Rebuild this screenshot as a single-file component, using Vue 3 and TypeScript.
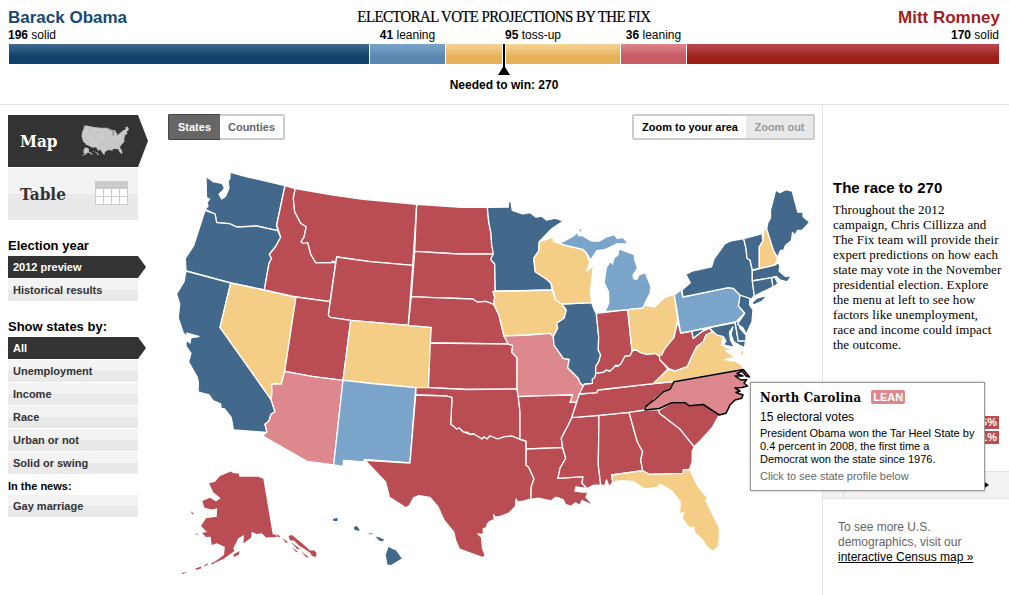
<script setup lang="ts">
interface Segment { id: string; votes: number; label: string }
interface Shape { id: string; rating: string; d: string }

const segments: Segment[] = [
  { id: 'dem', votes: 196, label: 'solid' },
  { id: 'dem-lean', votes: 41, label: 'leaning' },
  { id: 'toss', votes: 95, label: 'toss-up' },
  { id: 'rep-lean', votes: 36, label: 'leaning' },
  { id: 'rep', votes: 170, label: 'solid' },
]

const years: string[] = ['2012 preview', 'Historical results']
const filters: string[] = ['All', 'Unemployment', 'Income', 'Race', 'Urban or not', 'Solid or swing']

const states: Shape[] = [
  { id: 'WA', rating: 'dem', d: 'M230 172.2L246 176.5 261.7 180.2 285 185.7 276.7 225 277.7 230.7 267 228.5 256.7 226 236.7 227 229.3 223.7 216.7 222.7 215 214 205 209.3 208 206 207 203 209.5 199 206.5 197.5 206 176.5 209.5 179 213 181.5 222 183.3 224.5 188 222.5 191 219 194.3 221.7 199 225.5 196.5 229 188 228 181.7 230 178Z' },
  { id: 'OR', rating: 'dem', d: 'M205 210.5L215 214 216.7 222.7 229.3 223.7 236.7 227 256.7 226 277.7 230.7 280.7 237.3 276 246 269.3 254.5 271.7 258.3 269 263.3 264.3 290 230.7 283 186 271 185.3 258.3 193.5 246 199 229Z' },
  { id: 'CA', rating: 'dem', d: 'M186 271L230.7 283 220 327.3 271 399.3 275 411.7 271 414.3 269 421 265 424.3 267 432.5 233.4 429.8 231.2 417.3 224.5 409 221.2 408.5 220.5 403.8 213 400.5 209 394.8 198 392 198.4 383 197.2 377 188.5 361.7 191 353.3 186 346 186 340 190 343 191 337.5 199 336.5 187 333 186 336 183.2 332.7 178.2 318 179.7 304 176.5 294 184 281.7Z' },
  { id: 'NV', rating: 'toss', d: 'M230.7 283L264.3 290 296 297 284.7 371.3 281.3 384 271.7 384 272 393.3 271 399.3 220 327.3Z' },
  { id: 'ID', rating: 'rep', d: 'M285 185.7L295.3 188.7 293.3 198.3 294.7 211.7 300.7 223.3 306.3 226.7 304 237.3 301 241.7 303.5 243.5 307.7 242.3 310.7 254 315.7 262.7 332.7 262.7 335.7 262.3 330 301.7 296 297 264.3 290 269 263.3 271.7 258.3 269.3 254.5 276 246 280.7 237.3 276.7 225Z' },
  { id: 'MT', rating: 'rep', d: 'M295.3 188.7L330 194.5 363.3 199.3 416.7 204.3 412.7 265.3 370 261.7 336.7 257 335.7 262.3 333 261 331 262.7 315.7 262.7 310.7 254 307.7 242.3 303.5 243.5 301 241.7 304 237.3 306.3 226.7 300.7 223.3 294.7 211.7 293.3 198.3Z' },
  { id: 'WY', rating: 'rep', d: 'M336.7 257L370 261.7 412.7 265.3 408.3 325.3 350.7 320.3 330 317.3 328.3 315Z' },
  { id: 'UT', rating: 'rep', d: 'M296 297L330 301.7 328.3 315 330 317.3 350.7 320.3 343 380.3 313.3 376.7 284.7 371.3Z' },
  { id: 'CO', rating: 'toss', d: 'M350.7 320.3L408.3 325.3 431.3 327.3 428.5 387.7 415.7 387.7 376.7 384 343 380.3Z' },
  { id: 'AZ', rating: 'rep-lean', d: 'M343 380.3L313.3 376.7 284.7 371.3 281.3 384 271.7 384 272 393.3 271 399.3 275 411.7 271 414.3 269 421 265 424.3 267 432 262.5 435.7 307.3 461.5 333.7 464.8Z' },
  { id: 'NM', rating: 'dem-lean', d: 'M343 380.3L376.7 384 415.7 387.7 410 463 364.3 459.3 364 462 343.6 460.3 343 466.5 333.7 465Z' },
  { id: 'ND', rating: 'rep', d: 'M416.7 204.3L461.7 207.3 487.3 207.3 488.7 221.7 491 233.3 491.7 245 493.7 252 493.3 254 458.3 254 414.7 251.3Z' },
  { id: 'SD', rating: 'rep', d: 'M414.7 251.3L458.3 254 493.3 254 490.7 259.3 494.7 264 495.3 290.7 493 291.7 494.7 296.7 493.7 304.3 486 301.3 477.3 302 472.7 299 433.3 297.7 411.3 296.7Z' },
  { id: 'NE', rating: 'rep', d: 'M411.3 296.7L433.3 297.7 472.7 299 477.3 302 486 301.3 493.7 304.3 499 315 501.7 326.7 504 336 508.3 344 430.3 343 431.3 327.3 408.3 325.3Z' },
  { id: 'KS', rating: 'rep', d: 'M430.3 343L508.3 344 512.7 345.7 511.7 352.3 517 357.7 517 389 466.7 389.5 428.5 387.7Z' },
  { id: 'OK', rating: 'rep', d: 'M416 387.7L428.5 387.7 466.7 389.5 517 389 518.3 396.7 520 411.7 520 439.3 511.7 436 509 437.5 505 436.7 497.7 439 490 436 487 439 484 437 482 439 478.3 436.7 476 437 474 434 470 434.5 468 432.5 463.3 432 459 428 456.7 429 450.7 424.3 452 397.7 446.7 396 415.7 395Z' },
  { id: 'TX', rating: 'rep', d: 'M415.7 395L446.7 396 452 397.7 450.7 424.3 456.7 429 459 428 463.3 432 470 434.5 474 434 478.3 436.7 482 439 484 437 487 439 490 436 497.7 439 505 436.7 511.7 436 520 439.3 526 441 526 465 528.7 467.3 534 478.7 531.3 486.7 530.8 499 523.3 501.2 518 502 516 499 515.5 506.5 508.8 513.2 500 516.5 495.5 517.2 493.5 515 494.5 519.5 489.5 521.5 487.2 524.5 486.5 527.5 483.2 528.8 483.5 534.5 478 534 481.5 537 482.5 548.3 485.2 555.3 482.7 557.7 459.5 549.2 455.5 540 453.8 532.2 444.2 520.5 437.8 506.5 429.7 497.3 419 495.6 413.6 497.9 409.5 505.5 406 507.7 389.5 497.3 385.5 482 365 460.3 410 463Z' },
  { id: 'MN', rating: 'dem', d: 'M487.3 207.3L508.4 207 508.4 201.8 511 201.8 512.3 210.4 522.7 213.8 530 212.5 536 217.2 541.7 216.2 546.7 220.2 555 218.2 563.3 221 551.7 228.8 539.3 241.7 538.7 251 533.7 258.3 535.3 271.7 546.7 279.3 551 283.3 552 290 495.3 291 494.7 264 490.7 259.3 493.3 254 491.7 245 491 233.3 488.7 221.7Z' },
  { id: 'IA', rating: 'toss', d: 'M493 291.7L552 290 555.7 300 561.7 304 566.3 310 564 318.3 556.7 323.3 557.7 328.3 553.3 336.7 550 333.3 528.3 335 504 336 501.7 326.7 499 315 493.7 304.3 494.7 296.7Z' },
  { id: 'MO', rating: 'rep-lean', d: 'M504 336L528.3 335 550 333.3 553.3 336.7 554 345 563.3 358.3 569.3 359.3 567.7 367.7 578.3 378.3 580 382.7 583.3 386 582.3 392.7 579.3 394 576.7 402.3 570 402.3 572.7 395 546.7 395.7 518.3 396.7 517 389 517 357.7 511.7 352.3 512.7 345.7 508.3 344Z' },
  { id: 'AR', rating: 'rep', d: 'M518.3 396.7L546.7 395.7 572.7 395 570 402.3 576.7 402.3 571.7 417.7 568.3 425 561.3 438.3 562.7 447.7 526.3 449 526 441 520 439.3 520 411.7Z' },
  { id: 'LA', rating: 'rep', d: 'M526.3 449L562.7 447.7 565.7 458.3 560 468.3 558 478.3 583 476.7 582 483 587.5 488 582 488 576 487 575 491 582 492 588 492 586 497 593.5 505.5 582 500.5 579.5 505.5 575.7 502.8 571 506.2 565.5 504.5 563 499.6 559 498 555.7 497.3 551 501 538.3 498.2 530.8 499.5 531.3 486.7 534 478.7 528.7 467.3 526 465Z' },
  { id: 'MS', rating: 'rep', d: 'M571.7 417.7L599 415.3 598.3 465 600.7 485 593 485.5 587 488.5 582 483 583 476.7 558 478.3 560 468.3 565.7 458.3 562.7 447.7 561.3 438.3 568.3 425Z' },
  { id: 'AL', rating: 'rep', d: 'M599 415.3L629 412.3 637.3 441.7 642.7 451.7 640.7 460 642.7 470.7 611.7 475 612.7 482 609.3 487 606.5 480 604.5 486 600.7 485 598.3 465Z' },
  { id: 'TN', rating: 'rep', d: 'M571.7 417.7L599 415.3 629 412.3 645 410.3 645.7 406.7 651.7 401.7 663.3 391.7 670 389.3 674 381.7 653.3 383.7 597.7 390 596.7 392.7 579.3 394 576.7 402.3Z' },
  { id: 'KY', rating: 'rep', d: 'M579.3 394L596.7 392.7 597.7 390 653.3 383.7 668 369.3 663.3 363.3 660 360 659.3 356 655 353.3 646.7 354.3 640 352.3 635 349.3 632 351.7 630 355.7 625 356 620.7 364 618 366 613.3 366.7 610 371 606 370 604 372 595.7 373.3 592.3 379.3 592.3 383.3 584.3 384 583.3 386Z' },
  { id: 'IL', rating: 'dem', d: 'M561.7 304L591.7 302.7 594.3 310 596.3 313.3 598.7 336.7 598.3 350 600.7 355 598.7 361.7 595.7 366.7 595.7 373.3 595 377 592.3 379.3 592.3 383.3 584.3 384 583.3 386 580 382.7 578.3 378.3 567.7 367.7 569.3 359.3 563.3 358.3 554 345 553.3 336.7 557.7 328.3 556.7 323.3 564 318.3 566.3 310Z' },
  { id: 'IN', rating: 'rep', d: 'M596.3 313.3L627.7 309.7 632 351 630 355.7 625 356 620.7 364 618 366 616 365 613.3 368 610 371 606 370 604 372 595.7 373.3 595.7 366.7 598.7 361.7 600.7 355 598.3 350 598.7 336.7Z' },
  { id: 'WI', rating: 'toss', d: 'M539.3 241.7L546.7 239.5 553 236.8 553.8 241.7 561.7 244.3 582.7 249.3 586.7 253.3 588.3 259.3 590 262 586.7 271 593.5 265.5 590.5 290 591.7 302.7 561.7 304 555.7 300 551 283.3 546.7 279.3 535.3 271.7 533.7 258.3 538.7 251Z' },
  { id: 'MI-U', rating: 'dem-lean', d: 'M561 242.7L573.3 236.2 577 232 578.5 235.5 582.2 235.5 591.7 241.2 599 241.2 606.7 236.8 614.6 234.6 617 238.4 623.2 237.4 628 243.7 616.7 243.8 610 247.3 605 249.6 597 250.6 590.7 260 586.7 253.3 582.7 249.3 561.7 244.3ZM578.5 230.5L582.5 226.5 581 233Z' },
  { id: 'MI-L', rating: 'dem-lean', d: 'M619 249L634.5 254.7 634.5 259 637.5 268 633 275 633.5 278.5 636.8 279.3 639 274.7 645.3 272.8 651 286.7 650 293.5 645.5 302 643 308.5 605 311.6 608.8 303.3 608.5 291.7 604.2 282.7 606.2 268 610.5 261 612.5 264 614 257.8 618 255Z' },
  { id: 'OH', rating: 'toss', d: 'M627.7 309.7L642.7 308 645 305 654.3 307.2 665 297.2 674.3 294.7 677.7 320 674 337.7 665 348.3 661.7 355 659.3 356 655 353.3 646.7 354.3 640 352.3 635 349.3 632 351Z' },
  { id: 'WV', rating: 'rep', d: 'M677.7 321.7L680.7 333 691.7 331 693.3 338.3 701.7 331.7 709.3 328.3 712.7 331.7 706 335 703.3 341.7 696.7 346.7 691.7 356.7 687.3 366.7 675 371 668.3 368.3 663.3 363.3 660 360 659.3 356 661.7 355 665 348.3 674 337.7Z' },
  { id: 'VA', rating: 'toss', d: 'M712.7 331.7L723.3 337 721.7 345 733.5 351 725.5 350.5 735 357.5 725 359.5 735 361 742 365.5 743.3 369.3 674 381.7 653.3 383.7 668 369.3 675 371 687.3 366.7 691.7 356.7 696.7 346.7 703.3 341.7 706 335ZM744.5 347L742.5 358 740 353Z' },
  { id: 'MD', rating: 'dem', d: 'M691.7 331L735 322.7 738.3 341 745.7 340.7 744.5 347.5 740 345.5 733.5 341.5 731 334 733 327 729.5 332 730.5 340 734.5 347.5 723.3 344.8 726 341 723.3 336.7 716.7 335 709.3 327.7 701.7 331.7 693.3 338.3Z' },
  { id: 'DE', rating: 'dem', d: 'M735 321.7L738 321 740 328.3 746 335 746 340.7 738.3 341Z' },
  { id: 'NJ', rating: 'dem', d: 'M740 295L750 298.3 749.5 305 753 310 752 321.7 746.3 334 743 328 737.5 324 744.7 313.3 738.3 306Z' },
  { id: 'PA', rating: 'dem-lean', d: 'M674.3 295L681 289.7 683 297 728.3 287.7 733.3 288.3 740 295 738.3 306 744.7 313.3 736 321.7 691.7 331 680.7 333Z' },
  { id: 'NY', rating: 'dem', d: 'M683 297L682 290 690.3 282.7 685.7 274.3 692 271.2 711.5 266.8 714 259 724.7 243.8 730 241.2 743.7 238.5 746 248.3 747 258.3 750 260 752.3 270 752.3 280 754.3 295.5 751.7 299 740 295 733.3 288.3 728.3 287.7ZM752 302.5L757 298 767.5 295.3 762.5 301 753.5 305Z' },
  { id: 'VT', rating: 'dem', d: 'M743.7 238.5L762.3 233.5 762.7 241.7 759.3 246.7 759.3 268.5 752.3 270 750 260 747 258.3 746 248.3Z' },
  { id: 'NH', rating: 'toss', d: 'M764 228.5L766.7 228.5 773.3 250 777.7 258.3 775 265 759.3 268.7 759.3 246.7 762.7 241.7Z' },
  { id: 'ME', rating: 'dem', d: 'M766.7 229L767.8 223 770.5 218 770.5 210 775.7 190 780 192.7 786 189.5 792.2 191.2 797.8 212.2 802.8 212.2 803.2 216.8 809.7 222.3 802 230.5 797.5 230.5 794.8 235.5 792.5 232.5 791.5 240.5 785.5 245.5 783.5 250.5 780.5 250.5 777.7 257.5 773.3 250Z' },
  { id: 'MA', rating: 'dem', d: 'M752.3 270.5L775 265 778.5 262.5 780 267 779 271 785.5 276.5 792 275.5 787 281.8 780 280 776.7 276.7 752.3 281Z' },
  { id: 'CT', rating: 'dem', d: 'M752.3 281L771.7 277.7 773 287 754.3 296Z' },
  { id: 'RI', rating: 'dem', d: 'M771.7 277.7L774.7 277 778 283.5 773 287.5Z' },
  { id: 'SC', rating: 'rep', d: 'M658.3 410.5L671.7 402.7 685 402.7 689.3 405.3 703.3 404 719.3 415 711.9 428 700.3 440.6 694 446.7 680 429.3 659.3 413.3Z' },
  { id: 'GA', rating: 'rep', d: 'M629 412.3L645 410 658.3 409.5 659.3 413.3 680 429.3 694 446.7 692.2 451.7 692.2 461.7 689.5 469.3 683.3 470 683.3 473.3 649 474.3 642.7 470.7 640.7 460 642.7 451.7 637.3 441.7Z' },
  { id: 'FL', rating: 'toss', d: 'M611.7 475L642.7 470.7 649 474.3 683.3 473.3 683.3 470 689.5 469.3 698 486.4 707.8 498.3 705.8 500.3 719.6 528.3 718.9 545.5 713.3 551.4 707.8 547.8 702.8 540.5 694.5 532.5 693.8 527 692 528 688 526.5 682.2 518.5 683.5 512.5 679.5 513.8 680.2 502 671.3 490.5 660 484 657 487.6 645 489 633 481.3 620 480.6 612.7 482.6Z' },
]

const outlying: Shape[] = [
  { id: 'AK', rating: 'rep', d: 'M230.7 471.5L233 473 239 473.7 239.3 476.7 258.3 476.7 263.3 478.7 272.7 534.3 276 535 277 537 266 537.5 261.7 533.3 256.7 534 251.7 531.7 251 537.7 243.3 543.5 244 535 238.3 538.3 233.3 548.3 234.5 551 223.3 559 211 564.5 224 555 224.8 546.7 216.7 543.3 211.7 545 210.7 536.7 206 537 202 533 207 532 201 526 206 518.3 216.7 516.7 217.3 508.3 212 509.5 204.5 507.7 202.3 501 210 497.7 216 501.5 220.7 498.3 213.3 492.3 209 483.3 215 481.7 220 476ZM288.5 536L292 535 304 545 310 550.5 314.5 550.5 316.5 553 316 557 312 556 310 552.5 299 545.5 294 540.5 290 540.5ZM233.5 554.5L239.5 551 239 554.5 234 557ZM195.5 568.5L201 566.5 201 568.5 196 570ZM203 566L208.5 563 207 565.5ZM211 563.5L216 561 213 564.5ZM190 511L194 513.5 193 514.5ZM276 534L280 536 279 538ZM282 538L288 542 286 543ZM291 542L300 549 297 549ZM301 551L309 557.5 306 557ZM292 547L298 552 296 552ZM181 573L187 572 183 574ZM195 534L198 533.5 197 535Z' },
  { id: 'HI', rating: 'dem', d: 'M333 519L337.5 517.8 337.5 521 333.5 521ZM354 527L357 526 360 530.5 356 530.5 354 529ZM368 533L373.5 533.7 371 534.5ZM375.5 536.5L379.5 537.5 384 539.5 382.5 541.5 379 540.5ZM388.5 547L396 550.5 401.8 558.5 391 565 387.5 564.5 385.7 555Z' },
]

const carolina =
  'M674 381.7L743.3 369.5 749.5 377 746 376 742 371 737 373.5 743 376 735 376 741 380 746.7 379.5 744 383 747.5 386 742 387.5 735 388 740 391 736 392.5 743 395 741.7 398.3 735 400 730 405 726 413.3 719.3 415 703.3 404.5 689.3 405.8 685 402.7 671.7 402.7 659.3 408.5 645 410 645.7 406.7 651.7 401.7 655 399.5 663.3 391.7 670 389.3Z'
</script>

<template>
  <div class="page">
    <header class="top">
      <div class="names">
        <span class="name obama">Barack Obama</span>
        <h1>ELECTORAL VOTE PROJECTIONS BY THE FIX</h1>
        <span class="name romney">Mitt Romney</span>
      </div>
      <div class="tally labels">
        <span v-for="s in segments" :key="s.id" :class="'l-' + s.id"><b>{{ s.votes }}</b> {{ s.label }}</span>
      </div>
      <div class="tally bars">
        <i v-for="s in segments" :key="s.id" :class="'b-' + s.id"></i>
        <svg class="marker" width="12" height="32" viewBox="0 0 12 32">
          <path d="M4 0h4v20H4z" fill="#fff" /><path d="M5 0h2v23l5 8H0l5-8z" />
        </svg>
      </div>
      <p class="need">Needed to win: 270</p>
    </header>

    <div class="body">
      <nav class="side">
        <a class="view on">
          <span>Map</span>
          <svg class="usa" width="48" height="32" viewBox="0 0 48 32">
            <g transform="translate(-12.3 -12.2) scale(.0742)">
              <path v-for="s in states" :key="s.id" :d="s.d" />
              <path v-for="s in outlying" :key="s.id" :d="s.d" />
              <path :d="carolina" />
            </g>
          </svg>
          <svg class="tip" width="10" height="52"><path d="M0 0L10 26 0 52z" /></svg>
        </a>
        <a class="view">
          <span>Table</span>
          <svg class="grid" width="33" height="24" viewBox="0 0 33 24">
            <path d="M0 0h33v24H0z" fill="#ccc" />
            <path d="M1 8h7v7H1zM9 8h7v7H9zM17 8h7v7h-7zM25 8h7v7h-7zM1 16h7v7H1zM9 16h7v7H9zM17 16h7v7h-7zM25 16h7v7h-7z" fill="#fff" />
          </svg>
        </a>
        <h2>Election year</h2>
        <a v-for="(y, i) in years" :key="y" class="item" :class="{ on: i === 0 }">
          {{ y }}<svg v-if="i === 0" class="tip" width="8" height="22"><path d="M0 0L8 11 0 22z" /></svg>
        </a>
        <h2>Show states by:</h2>
        <a v-for="(f, i) in filters" :key="f" class="item" :class="{ on: i === 0 }">
          {{ f }}<svg v-if="i === 0" class="tip" width="8" height="22"><path d="M0 0L8 11 0 22z" /></svg>
        </a>
        <h3>In the news:</h3>
        <a class="item">Gay marriage</a>
      </nav>

      <main class="center">
        <div class="tools">
          <div class="switch"><button class="dark">States</button><button class="plain">Counties</button></div>
          <div class="switch zoom"><button class="area">Zoom to your area</button><button class="out">Zoom out</button></div>
        </div>
        <svg class="map" width="654" height="430" viewBox="168 160 654 430">
          <path v-for="s in states" :key="s.id" :d="s.d" :class="'s-' + s.rating" />
          <path v-for="s in outlying" :key="s.id" :d="s.d" class="isle" :class="'s-' + s.rating" />
          <path :d="carolina" class="s-rep-lean picked" />
        </svg>
      </main>

      <aside class="info">
        <h2>The race to 270</h2>
        <p class="story">
          Throughout the 2012<br />campaign, Chris Cillizza and<br />The Fix team will provide their<br />expert predictions on how each<br />state may vote in the November<br />presidential election. Explore<br />the menu at left to see how<br />factors like unemployment,<br />race and income could impact<br />the outcome.
        </p>
        <div class="rates"><b>6%</b><b>1%</b></div>
        <div class="band"><i></i><svg width="6" height="8"><path d="M0 0L6 4 0 8z" /></svg></div>
        <p class="census">To see more U.S.<br />demographics, visit our<br /><a>interactive Census map »</a></p>
      </aside>
    </div>

    <div class="popup">
      <div class="head"><strong>North Carolina</strong><em>LEAN</em></div>
      <p class="ev">15 electoral votes</p>
      <p class="note">President Obama won the Tar Heel State by<br />0.4 percent in 2008, the first time a<br />Democrat won the state since 1976.</p>
      <p class="more">Click to see state profile below</p>
    </div>
  </div>
</template>

<style>
body { background: #fff; overflow: hidden; }
</style>

<style scoped>
.page { position: relative; width: 1009px; height: 595px; overflow: hidden; background: #fff; color: #000; font: 12px/14px "Liberation Sans", Arial, sans-serif; }
.page * { box-sizing: border-box; }
h1, h2, h3, p { margin: 0; }
.top { height: 105px; padding: 8px 10px 0 9px; border-bottom: 1px solid #e4e4e4; }
.names { display: grid; grid-template-columns: 1fr auto 1fr; height: 20px; }
.name { font-size: 17px; line-height: 20px; font-weight: bold; margin-left: -1px; }
.obama { color: #174a77; }
.romney { color: #a32019; text-align: right; margin-right: -1px; }
h1 { font: 16px/18px "Liberation Serif", serif; letter-spacing: -.6px; white-space: nowrap; transform: scaleX(.928); -webkit-text-stroke: .2px #000; }
.tally { display: grid; grid-template-columns: 360px 75px 174px 65px 312px; gap: 1px; }
.labels { height: 16px; line-height: 14px; text-align: center; }
.l-dem { text-align: left; margin-left: -1px; }
.l-rep { text-align: right; }
.bars { position: relative; height: 20px; }
.b-dem { background: linear-gradient(#426990, #0e4069 65%, #0e4069); }
.b-dem-lean { background: linear-gradient(#7aa4ca, #5a86af 65%, #5a86af); }
.b-toss { background: linear-gradient(#f6d496, #e5b25a 65%, #e5b25a); }
.b-rep-lean { background: linear-gradient(#dd858c, #c65b61 65%, #c65b61); }
.b-rep { background: linear-gradient(#ba4b52, #9d2018 65%, #9d2018); }
.marker { position: absolute; left: 489px; top: 0; }
.need { padding-top: 14px; text-align: center; font-weight: bold; }
.body { display: grid; grid-template-columns: 168px 654px 187px; height: 490px; }
.side { width: 138px; padding: 10px 0 0 8px; }
.view, .item { position: relative; display: flex; align-items: center; margin-bottom: 1px; background: linear-gradient(#f3f3f3 50%, #e9e9e9 50%); color: #333; }
.view { height: 52px; justify-content: space-between; padding: 0 10px 0 12px; font: bold 17px/20px "DejaVu Serif Condensed", "DejaVu Serif", serif; font-stretch: condensed; }
.view.on, .item.on { background: #333; color: #fff; }
.usa { fill: #ccc; stroke: #ccc; stroke-width: 8; margin-right: -1px; }
.grid { margin-bottom: 2px; }
.tip { position: absolute; left: 130px; top: 0; fill: #333; }
.item { height: 22px; padding-left: 5px; font-size: 11px; font-weight: bold; }
.side h2 { font-size: 13px; line-height: 16px; margin: 18px 0 2px; white-space: nowrap; }
.side h3 { font-size: 11px; line-height: 14px; margin: 5px 0 2px; }
.center { padding: 9px 0 0; }
.tools { display: flex; justify-content: space-between; padding-right: 7px; height: 26px; }
.switch { display: flex; border: 2px solid #ccc; border-radius: 2px; }
button { border: 0; padding: 0; font: bold 11px/22px "Liberation Sans", Arial, sans-serif; text-align: center; background: #fff; }
.dark { width: 52px; margin: -2px 0 -2px -2px; border: 1px solid #444; border-right: 0; border-radius: 2px 0 0 2px; background: #666; color: #fff; }
.plain { width: 63px; color: #666; }
.area { width: 112px; color: #000; }
.out { width: 67px; background: #e9e9e9; color: #999; }
.map { display: block; margin-top: 20px; stroke: #fff; stroke-width: 1.3; stroke-linejoin: round; }
.s-dem { fill: #42698c; }
.s-dem-lean { fill: #7aa4ca; }
.s-toss { fill: #f4ce87; }
.s-rep-lean { fill: #dd888d; }
.s-rep { fill: #ba4d53; }
.isle { stroke: none; }
.picked { stroke: #000; stroke-width: 1.5; }
.info { border-left: 1px solid #e4e4e4; }
.info h2 { padding: 75px 0 0 10px; font-size: 15px; line-height: 16px; }
.story { padding: 6px 0 0 10px; font: 13px/15px "Liberation Serif", serif; letter-spacing: .09px; white-space: nowrap; }
.rates { display: flex; flex-direction: column; gap: 2px; margin: 64px 10px 0 0; align-items: flex-end; }
.rates b { height: 13px; width: 26px; padding-right: 2px; text-align: right; font-size: 11px; line-height: 13px; background: #ba4d53; color: #fff; }
.band { display: flex; align-items: center; justify-content: space-between; height: 28px; margin-top: 27px; padding: 0 20px; border: solid #e4e4e4; border-width: 1px 0; background: #f2f2f2; }
.band i { width: 1px; height: 26px; background: #e0e0e0; }
.census { padding: 21px 0 0 15px; line-height: 15px; color: #666; }
.census a { color: #000; text-decoration: underline; }
.popup { position: absolute; left: 750px; top: 382px; width: 235px; height: 109px; padding: 7px 9px; border: 1px solid #999; background: #fff; box-shadow: 0 0 2px rgba(0, 0, 0, .35); white-space: nowrap; }
.head { display: flex; align-items: center; height: 15px; gap: 10px; }
.head strong { font: bold 13px/16px "DejaVu Serif Condensed", "DejaVu Serif", serif; font-stretch: condensed; letter-spacing: .2px; }
.head em { padding: 0 2px; height: 14px; margin-top: -2px; border-radius: 2px; background: #dd888d; color: #fff; font: bold 11px/14px "Liberation Sans", Arial, sans-serif; }
.ev { margin-top: 5px; }
.note { margin-top: 3px; font-size: 11px; line-height: 13px; }
.more { margin-top: 4px; font-size: 11px; line-height: 13px; color: #666; }
</style>
